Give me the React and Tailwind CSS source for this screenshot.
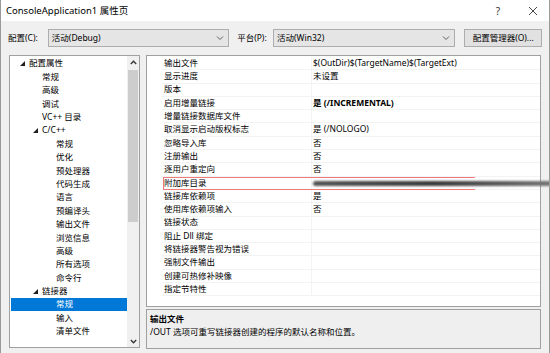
import React from 'react';

const font = { fontFamily: '"Noto Sans", "Noto Sans CJK SC", sans-serif' };

const tree = [
  { t: '配置属性', lvl: 0, open: true },
  { t: '常规', lvl: 1 },
  { t: '高级', lvl: 1 },
  { t: '调试', lvl: 1 },
  { t: 'VC++ 目录', lvl: 1 },
  { t: 'C/C++', lvl: 1, open: true },
  { t: '常规', lvl: 2 },
  { t: '优化', lvl: 2 },
  { t: '预处理器', lvl: 2 },
  { t: '代码生成', lvl: 2 },
  { t: '语言', lvl: 2 },
  { t: '预编译头', lvl: 2 },
  { t: '输出文件', lvl: 2 },
  { t: '浏览信息', lvl: 2 },
  { t: '高级', lvl: 2 },
  { t: '所有选项', lvl: 2 },
  { t: '命令行', lvl: 2 },
  { t: '链接器', lvl: 1, open: true },
  { t: '常规', lvl: 2, sel: true },
  { t: '输入', lvl: 2 },
  { t: '清单文件', lvl: 2 },
];

const props = [
  ['输出文件', '$(OutDir)$(TargetName)$(TargetExt)'],
  ['显示进度', '未设置'],
  ['版本', ''],
  ['启用增量链接', '是 (/INCREMENTAL)', true],
  ['增量链接数据库文件', ''],
  ['取消显示启动版权标志', '是 (/NOLOGO)'],
  ['忽略导入库', '否'],
  ['注册输出', '否'],
  ['逐用户重定向', '否'],
  ['附加库目录', 'BLUR'],
  ['链接库依赖项', '是'],
  ['使用库依赖项输入', '否'],
  ['链接状态', ''],
  ['阻止 Dll 绑定', ''],
  ['将链接器警告视为错误', ''],
  ['强制文件输出', ''],
  ['创建可热修补映像', ''],
  ['指定节特性', ''],
];

function Chevron() {
  return (
    <svg width="8" height="5" viewBox="0 0 8 5">
      <polyline points="1,0.5 4,3.5 7,0.5" fill="none" stroke="#606060" strokeWidth="1" />
    </svg>
  );
}

function Combo({ text, className }) {
  return (
    <div className={`h-[18px] border border-[#adadad] bg-[#e5e5e5] flex items-center justify-between pl-[3px] pr-[4px] ${className}`}>
      <span>{text}</span>
      <Chevron />
    </div>
  );
}

function Triangle() {
  return (
    <svg width="5" height="5" viewBox="0 0 5 5" className="shrink-0">
      <polygon points="5,0 5,5 0,5" fill="#1e1e1e" />
    </svg>
  );
}

export default function App() {
  return (
    <div style={font} className="w-[550px] h-[353px] bg-[#f0f0f0] border-x border-[#9a9a9a] flex flex-col text-[8.5px] text-black overflow-hidden leading-none">
      {/* title bar */}
      <div className="h-[21px] bg-white flex items-center shrink-0">
        <span className="pl-[5px] text-[9.5px] flex-1">ConsoleApplication1 属性页</span>
        <span className="text-[10px] text-[#333] mr-[28px]">?</span>
        <svg width="10" height="10" viewBox="0 0 10 10" className="mr-[11px]">
          <path d="M1 1L9 9M9 1L1 9" stroke="#333" strokeWidth="0.9" />
        </svg>
      </div>

      {/* config row */}
      <div className="flex items-center h-[18px] mt-[8px] pl-[7px] pr-[7px]">
        <span className="w-[40px]">配置(C):</span>
        <Combo text="活动(Debug)" className="w-[182px]" />
        <span className="ml-[8px] w-[36px]">平台(P):</span>
        <Combo text="活动(Win32)" className="w-[183px]" />
        <div className="ml-[9px] w-[78px] h-[18px] border border-[#adadad] bg-[#e1e1e1] flex items-center justify-center">
          配置管理器(O)...
        </div>
      </div>

      {/* main */}
      <div className="flex mt-[8px] pl-[8px] pr-[8px] h-[294px]">
        {/* tree */}
        <div className="w-[131px] h-[293px] bg-white border border-[#a0a0a0] flex">
          <div className="flex-1 pt-[1px] pl-[1px]">
            {tree.map((n, i) => (
              <div
                key={i}
                className={`h-[13.4px] flex items-center ${n.sel ? 'bg-[#0078d7] text-white' : ''}`}
                style={{ paddingLeft: n.lvl === 0 ? 9 : n.lvl === 1 ? (n.open ? 22 : 31) : 45 }}
              >
                {n.open && <Triangle />}
                <span className={n.open ? 'ml-[4px]' : ''}>{n.t}</span>
              </div>
            ))}
          </div>
          <div className="w-[12px] bg-[#f0f0f0] flex flex-col items-center">
            <div className="h-[12px] flex items-center justify-center">
              <svg width="7" height="5" viewBox="0 0 7 5">
                <polyline points="0.8,4 3.5,1.2 6.2,4" fill="none" stroke="#333" strokeWidth="1.3" />
              </svg>
            </div>
            <div className="w-[10px] h-[152px] bg-[#cdcdcd] mt-[2px]" />
            <div className="flex-1" />
            <div className="h-[12px] flex items-center justify-center">
              <svg width="7" height="5" viewBox="0 0 7 5">
                <polyline points="0.8,1 3.5,3.8 6.2,1" fill="none" stroke="#333" strokeWidth="1.3" />
              </svg>
            </div>
          </div>
        </div>

        {/* right */}
        <div className="ml-[6px] flex-1 flex flex-col">
          <div className="h-[252px] bg-white border border-[#a0a0a0] pt-[1px] flex flex-col">
            {props.map(([k, v, bold], i) => (
              <div key={i} className="h-[13.3px] flex relative">
                <div className="w-[15px] shrink-0" />
                <div className="w-[150px] shrink-0 flex items-center pl-[2px] border-b border-r border-[#f3f3f3]">
                  {k}
                </div>
                <div className={`flex-1 flex items-center pl-[1px] border-b border-[#f3f3f3] ${bold ? 'font-bold' : ''}`}>
                  {v === 'BLUR' ? '' : v}
                </div>
                {v === 'BLUR' && (
                  <>
                    <div className="absolute z-10 left-[16px] top-0 w-[312px] h-[13px] flex flex-col justify-between">
                      <div className="h-px bg-[#ee7a7a]" />
                      <div className="h-px bg-[#ee7a7a]" />
                    </div>
                    <div className="absolute z-10 left-[16px] top-0 w-px h-[13px] bg-[#ee7a7a]" />
                    <div className="absolute z-10 left-[166px] top-[4px] w-[240px] h-[5px] rounded-full bg-gradient-to-r from-[#555] via-[#3a3a3a] to-[#777] blur-[1px]" />
                  </>
                )}
              </div>
            ))}
            <div className="flex-1" />
          </div>
          <div className="mt-[2px] h-[40px] border border-[#a0a0a0] bg-[#efefef] pl-[3px] pt-[5px] flex flex-col gap-[4px]">
            <span className="font-bold">输出文件</span>
            <span>/OUT 选项可重写链接器创建的程序的默认名称和位置。</span>
          </div>
        </div>
      </div>
    </div>
  );
}
